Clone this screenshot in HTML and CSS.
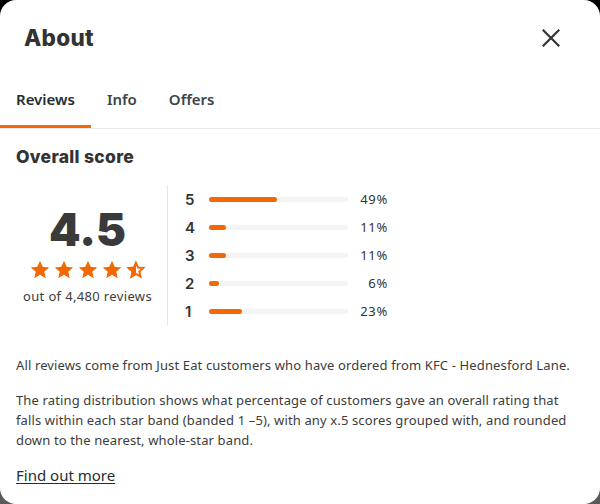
FILE: index.html
```html
<!DOCTYPE html>
<html lang="en">
<head>
<meta charset="utf-8">
<title>About</title>
<link rel="stylesheet" href="styles.css">
</head>
<body>
<div class="card">
  <header class="head">
    <h1 class="title">About</h1>
    <button class="close" aria-label="Close">
      <svg width="18" height="18" viewBox="0 0 18 18"><path d="M1.5 1.5L16.5 16.5M16.5 1.5L1.5 16.5" stroke="#333" stroke-width="2.2" stroke-linecap="square" fill="none"/></svg>
    </button>
  </header>
  <nav class="tabs">
    <span class="tab active">Reviews</span>
    <span class="tab">Info</span>
    <span class="tab">Offers</span>
  </nav>
  <section class="content">
    <h2 class="sub">Overall score</h2>
    <div class="score">
      <div class="summary">
        <div class="big">4.5</div>
        <div class="stars">
          <svg class="star" viewBox="0 0 24 24"><path d="M12 1l3.2 7.2 7.8.7-5.9 5.2 1.8 7.7L12 17.8l-6.9 4 1.8-7.7L1 8.9l7.8-.7z" fill="#f36805"/></svg>
          <svg class="star" viewBox="0 0 24 24"><path d="M12 1l3.2 7.2 7.8.7-5.9 5.2 1.8 7.7L12 17.8l-6.9 4 1.8-7.7L1 8.9l7.8-.7z" fill="#f36805"/></svg>
          <svg class="star" viewBox="0 0 24 24"><path d="M12 1l3.2 7.2 7.8.7-5.9 5.2 1.8 7.7L12 17.8l-6.9 4 1.8-7.7L1 8.9l7.8-.7z" fill="#f36805"/></svg>
          <svg class="star" viewBox="0 0 24 24"><path d="M12 1l3.2 7.2 7.8.7-5.9 5.2 1.8 7.7L12 17.8l-6.9 4 1.8-7.7L1 8.9l7.8-.7z" fill="#f36805"/></svg>
          <svg class="star" viewBox="0 0 24 24"><defs><clipPath id="half"><rect x="0" y="0" width="12" height="24"/></clipPath></defs><path d="M12 3.4l2.5 5.7 6.2.6-4.7 4.1 1.4 6.1L12 16.7l-5.4 3.2 1.4-6.1-4.7-4.1 6.2-.6z" fill="none" stroke="#f36805" stroke-width="2.4" stroke-linejoin="miter"/><path d="M12 1l3.2 7.2 7.8.7-5.9 5.2 1.8 7.7L12 17.8l-6.9 4 1.8-7.7L1 8.9l7.8-.7z" fill="#f36805" clip-path="url(#half)"/></svg>
        </div>
        <div class="count">out of 4,480 reviews</div>
      </div>
      <ul class="bars">
        <li class="row"><span class="num">5</span><span class="track"><span class="fill" style="width:49%"></span></span><span class="pct">49%</span></li>
        <li class="row"><span class="num">4</span><span class="track"><span class="fill" style="width:12%"></span></span><span class="pct">11%</span></li>
        <li class="row"><span class="num">3</span><span class="track"><span class="fill" style="width:12%"></span></span><span class="pct">11%</span></li>
        <li class="row"><span class="num">2</span><span class="track"><span class="fill" style="width:7%"></span></span><span class="pct">6%</span></li>
        <li class="row"><span class="num">1</span><span class="track"><span class="fill" style="width:24%"></span></span><span class="pct">23%</span></li>
      </ul>
    </div>
    <p class="text first">All reviews come from Just Eat customers who have ordered from KFC - Hednesford Lane.</p>
    <p class="text">The rating distribution shows what percentage of customers gave an overall rating that falls within each star band (banded 1 &ndash;5), with any x.5 scores grouped with, and rounded down to the nearest, whole-star band.</p>
    <a class="more" href="#">Find out more</a>
  </section>
</div>
</body>
</html>
```
FILE: styles.css
```css
* { box-sizing: border-box; }
html, body { margin: 0; padding: 0; }
body {
  width: 600px;
  height: 504px;
  overflow: hidden;
  background: linear-gradient(#000 0%, #222 50%, #5a5a5a 100%);
  font-family: "Noto Sans", "Open Sans", sans-serif;
  color: #333;
}
.card {
  width: 600px;
  height: 504px;
  background: #fff;
  border-radius: 16px;
  overflow: hidden;
}
.head {
  height: 74px;
  padding: 0 40px 0 24px;
  display: flex;
  align-items: center;
  justify-content: space-between;
}
.title {
  margin: 0;
  font-family: Inter, "Noto Sans", sans-serif;
  font-weight: 800;
  font-size: 22.5px;
  color: #333;
  letter-spacing: 0.3px;
}
.close {
  border: 0;
  background: none;
  padding: 0;
  width: 18px;
  height: 18px;
  display: flex;
  margin-top: 2px;
}
.tabs {
  display: flex;
  border-bottom: 1px solid #e8e8e8;
}
.tab {
  padding: 0 16px;
  height: 54px;
  line-height: 51px;
  border-bottom: 3px solid transparent;
  font-size: 15px;
  font-weight: 600;
  color: #3b464a;
}
.tab.active {
  border-bottom-color: #f36805;
  color: #242e30;
}
.content {
  padding: 0 16px;
}
.sub {
  margin: 16px 0 0;
  line-height: 24px;
  font-family: Inter, "Noto Sans", sans-serif;
  font-weight: 800;
  font-size: 17.5px;
  color: #333;
  letter-spacing: 0.3px;
}
.score {
  margin-top: 16px;
  display: flex;
}
.summary {
  width: 152px;
  padding-right: 8px;
  border-right: 1px solid #e6e6e6;
  display: flex;
  flex-direction: column;
  align-items: center;
  justify-content: center;
}
.big {
  font-family: Inter, sans-serif;
  font-weight: 900;
  font-size: 45px;
  line-height: 50px;
  color: #3a3a3a;
}
.stars {
  display: flex;
  gap: 4px;
  margin-top: 5px;
}
.star {
  width: 20px;
  height: 20px;
}
.count {
  margin-top: 7px;
  font-size: 13px;
  color: #3c3c3c;
  letter-spacing: 0.35px;
}
.bars {
  list-style: none;
  margin: 0;
  padding: 0 0 0 17px;
}
.row {
  height: 28px;
  display: flex;
  align-items: center;
}
.num {
  width: 24px;
  font-family: Inter, sans-serif;
  font-weight: 600;
  font-size: 15px;
  color: #333;
}
.track {
  width: 139px;
  height: 5px;
  border-radius: 3px;
  background: #f5f3f1;
  display: flex;
}
.fill {
  height: 5px;
  border-radius: 3px;
  background: #f36805;
}
.pct {
  width: 40px;
  text-align: right;
  font-size: 13px;
  color: #333;
  letter-spacing: 0.7px;
}
.text {
  margin: 15px 0 0;
  font-size: 13px;
  line-height: 20px;
  color: #3c3c3c;
  letter-spacing: 0.13px;
}
.text.first {
  margin-top: 30px;
}
.more {
  display: inline-block;
  margin-top: 14px;
  font-size: 15px;
  line-height: 22px;
  color: #242e30;
  text-decoration: underline;
  text-underline-offset: 2px;
}
```
